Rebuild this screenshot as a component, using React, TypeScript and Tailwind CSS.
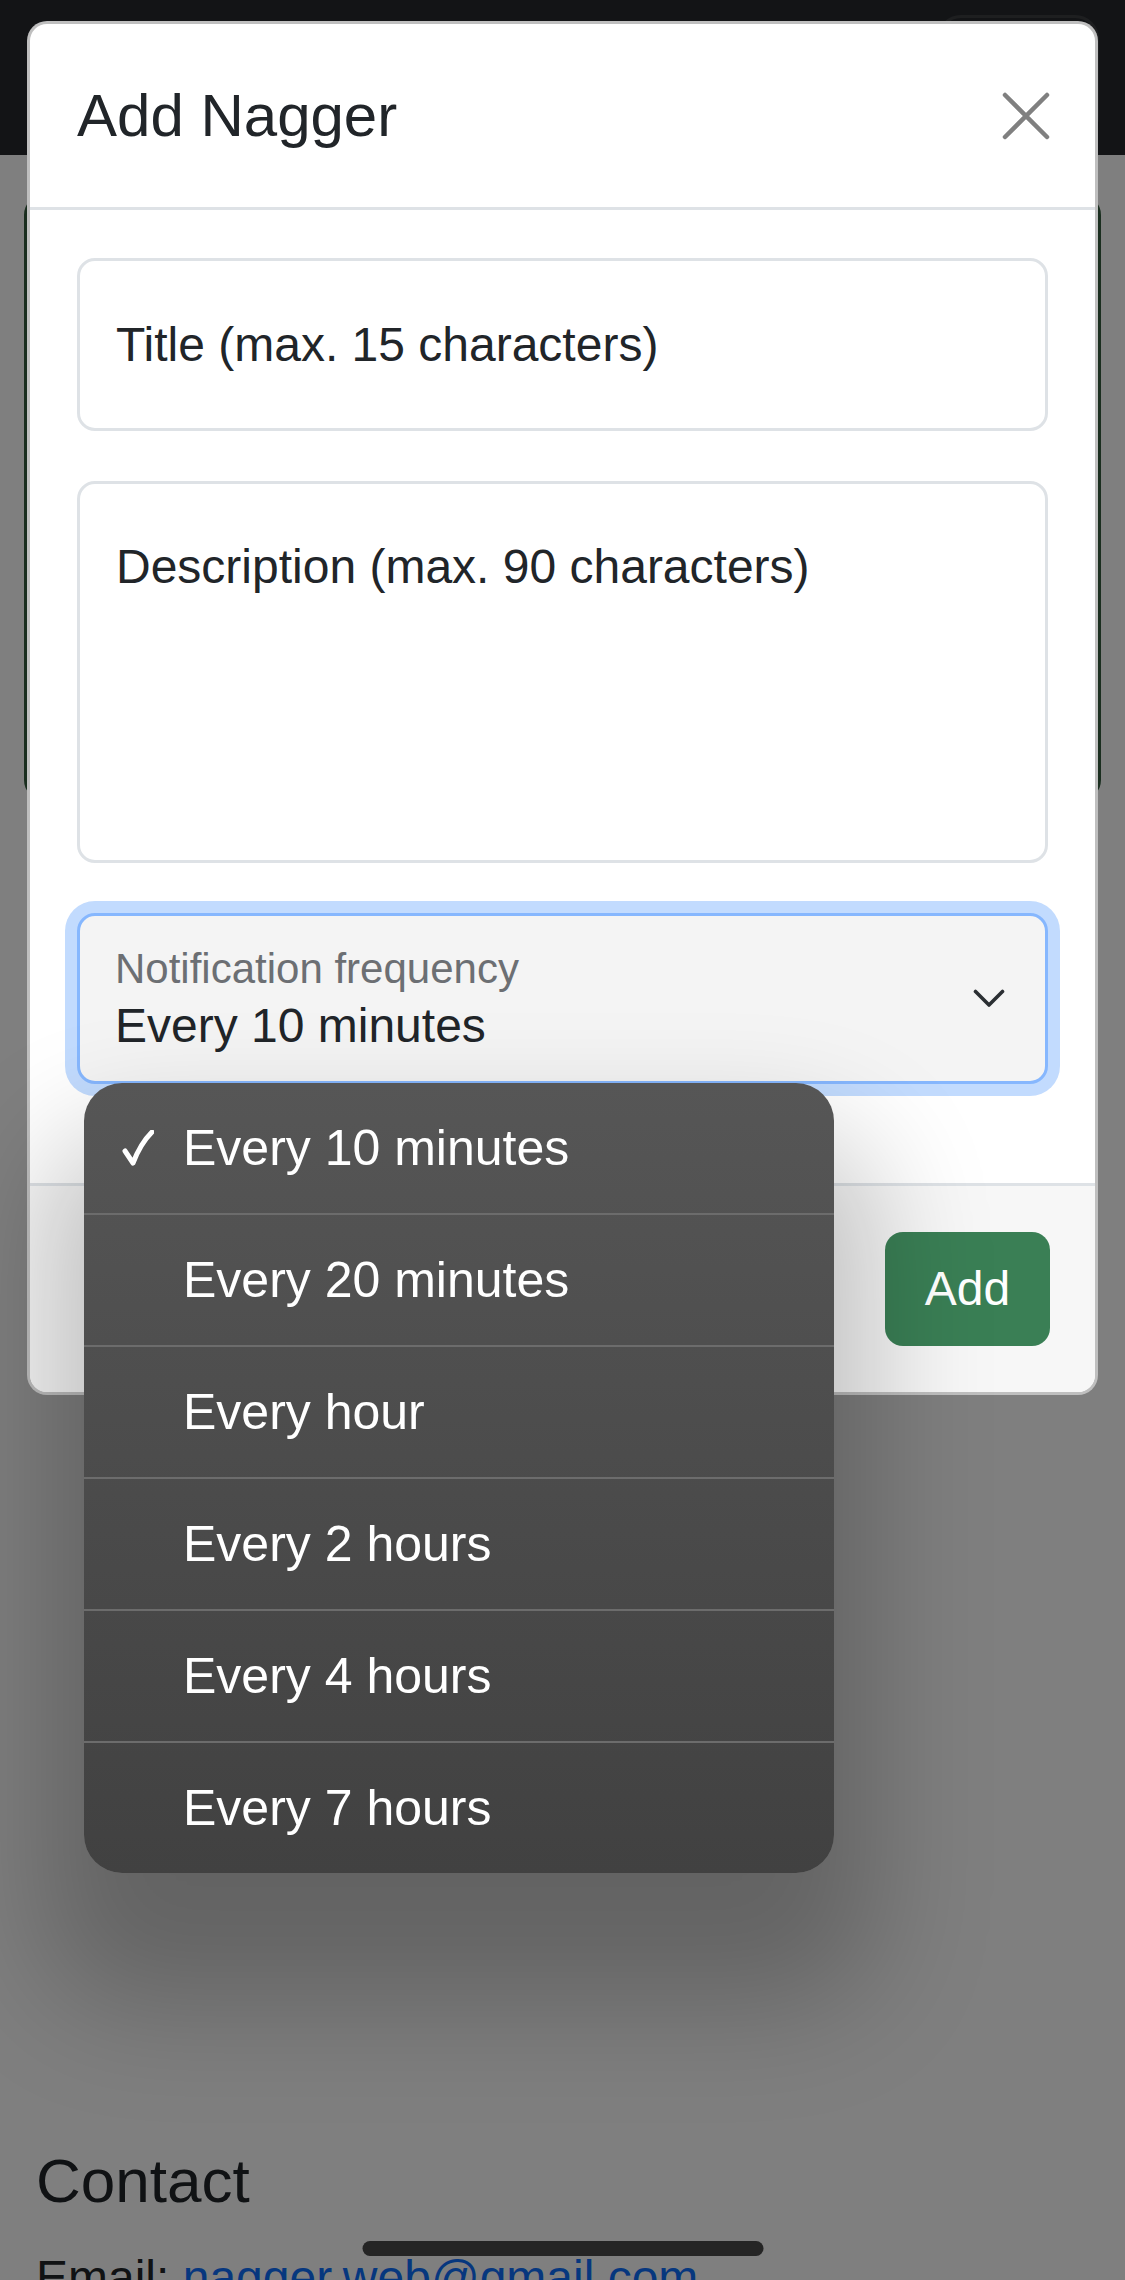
const options = [
  "Every 10 minutes",
  "Every 20 minutes",
  "Every hour",
  "Every 2 hours",
  "Every 4 hours",
  "Every 7 hours",
];

function CloseIcon() {
  return (
    <svg width="48" height="48" viewBox="0 0 48 48" fill="none">
      <path d="M3 3L45 45M45 3L3 45" stroke="#808080" strokeWidth="4.5" strokeLinecap="round" />
    </svg>
  );
}

function Chevron() {
  return (
    <svg width="32" height="19" viewBox="0 0 32 19" fill="none">
      <path d="M2.5 2.5L16 16L29.5 2.5" stroke="#2b2f33" strokeWidth="3.6" strokeLinecap="round" strokeLinejoin="round" />
    </svg>
  );
}

function Check() {
  return (
    <svg width="32" height="36" viewBox="0 0 32 36" fill="none">
      <path d="M3 21L11 33C16 20 22 10 30 2" stroke="white" strokeWidth="5" strokeLinecap="round" strokeLinejoin="round" />
    </svg>
  );
}

export default function App() {
  return (
    <div className="relative h-[2280px] w-full overflow-hidden bg-white font-['Liberation_Sans',Arial,sans-serif] text-[#212529]">
      {/* page behind the modal */}
      <nav className="flex h-[155px] items-start justify-end bg-[#26282c] pr-[26px] pt-[15px]">
        <div className="h-[125px] w-[162px] rounded-[24px] border-[3px] border-white/10" />
      </nav>
      <main className="px-[24px] pt-[40px]">
        <div className="h-[605px] rounded-[20px] border-[3px] border-[#345d3f]" />
        <section className="mt-[1344px] px-[12px]">
          <h2 className="text-[62px] leading-[1.2]">Contact</h2>
          <p className="mt-[24px] text-[48px] leading-[1.5]">
            Email:{" "}
            <a href="#" className="text-[#0d6efd] underline">
              nagger.web@gmail.com
            </a>
          </p>
        </section>
      </main>

      {/* backdrop */}
      <div className="absolute inset-0 bg-black/50" />

      {/* modal */}
      <div className="absolute left-[27px] top-[21px] flex w-[1071px] flex-col overflow-hidden rounded-[20px] border-[3px] border-black/25 bg-white">
        <div className="flex h-[186px] items-center justify-between border-b-[3px] border-[#dee2e6] pl-[47px] pr-[45px]">
          <h5 className="text-[60px] leading-[1.2]">Add Nagger</h5>
          <CloseIcon />
        </div>

        <div className="flex flex-col px-[47px] pb-[99px] pt-[48px]">
          <div className="flex h-[173px] items-center rounded-[18px] border-[3px] border-[#dee2e6] pl-[36px] text-[48px]">
            Title (max. 15 characters)
          </div>
          <div className="mt-[50px] h-[382px] rounded-[18px] border-[3px] border-[#dee2e6] pl-[36px] pt-[47px] text-[48px] leading-[1.5]">
            Description (max. 90 characters)
          </div>
          <div className="mt-[50px] flex h-[171px] items-center justify-between rounded-[18px] border-[3px] border-[#86b7fe] bg-[#f4f4f4] pl-[35px] pr-[40px] shadow-[0_0_0_12px_rgba(13,110,253,0.25)]">
            <div className="flex flex-col">
              <span className="text-[42px] leading-none text-[#6c6f73]">Notification frequency</span>
              <span className="mt-[12px] text-[48px] leading-none">Every 10 minutes</span>
            </div>
            <Chevron />
          </div>
        </div>

        <div className="flex h-[209px] items-center justify-end border-t-[3px] border-[#dee2e6] bg-[#f7f7f7] pr-[45px]">
          <button className="h-[114px] w-[165px] rounded-[18px] bg-[#3a7f55] text-[48px] text-white">Add</button>
        </div>
      </div>

      {/* native select menu */}
      <div className="absolute left-[84px] top-[1083px] flex h-[790px] w-[750px] flex-col overflow-hidden rounded-[38px] bg-gradient-to-b from-[#565656] to-[#414141] shadow-[0_90px_120px_40px_rgba(0,0,0,0.22)]">
        {options.map((o, i) => (
          <div
            key={o}
            className={`flex flex-1 items-center pl-[38px] text-[50px] text-white ${i > 0 ? "border-t-2 border-[#6c6c6c]" : ""}`}
          >
            <span className="flex w-[61px] items-center">{i === 0 && <Check />}</span>
            {o}
          </div>
        ))}
      </div>

      {/* home indicator */}
      <div className="absolute bottom-[24px] left-1/2 h-[15px] w-[401px] -translate-x-1/2 rounded-full bg-[#252525]" />
    </div>
  );
}
